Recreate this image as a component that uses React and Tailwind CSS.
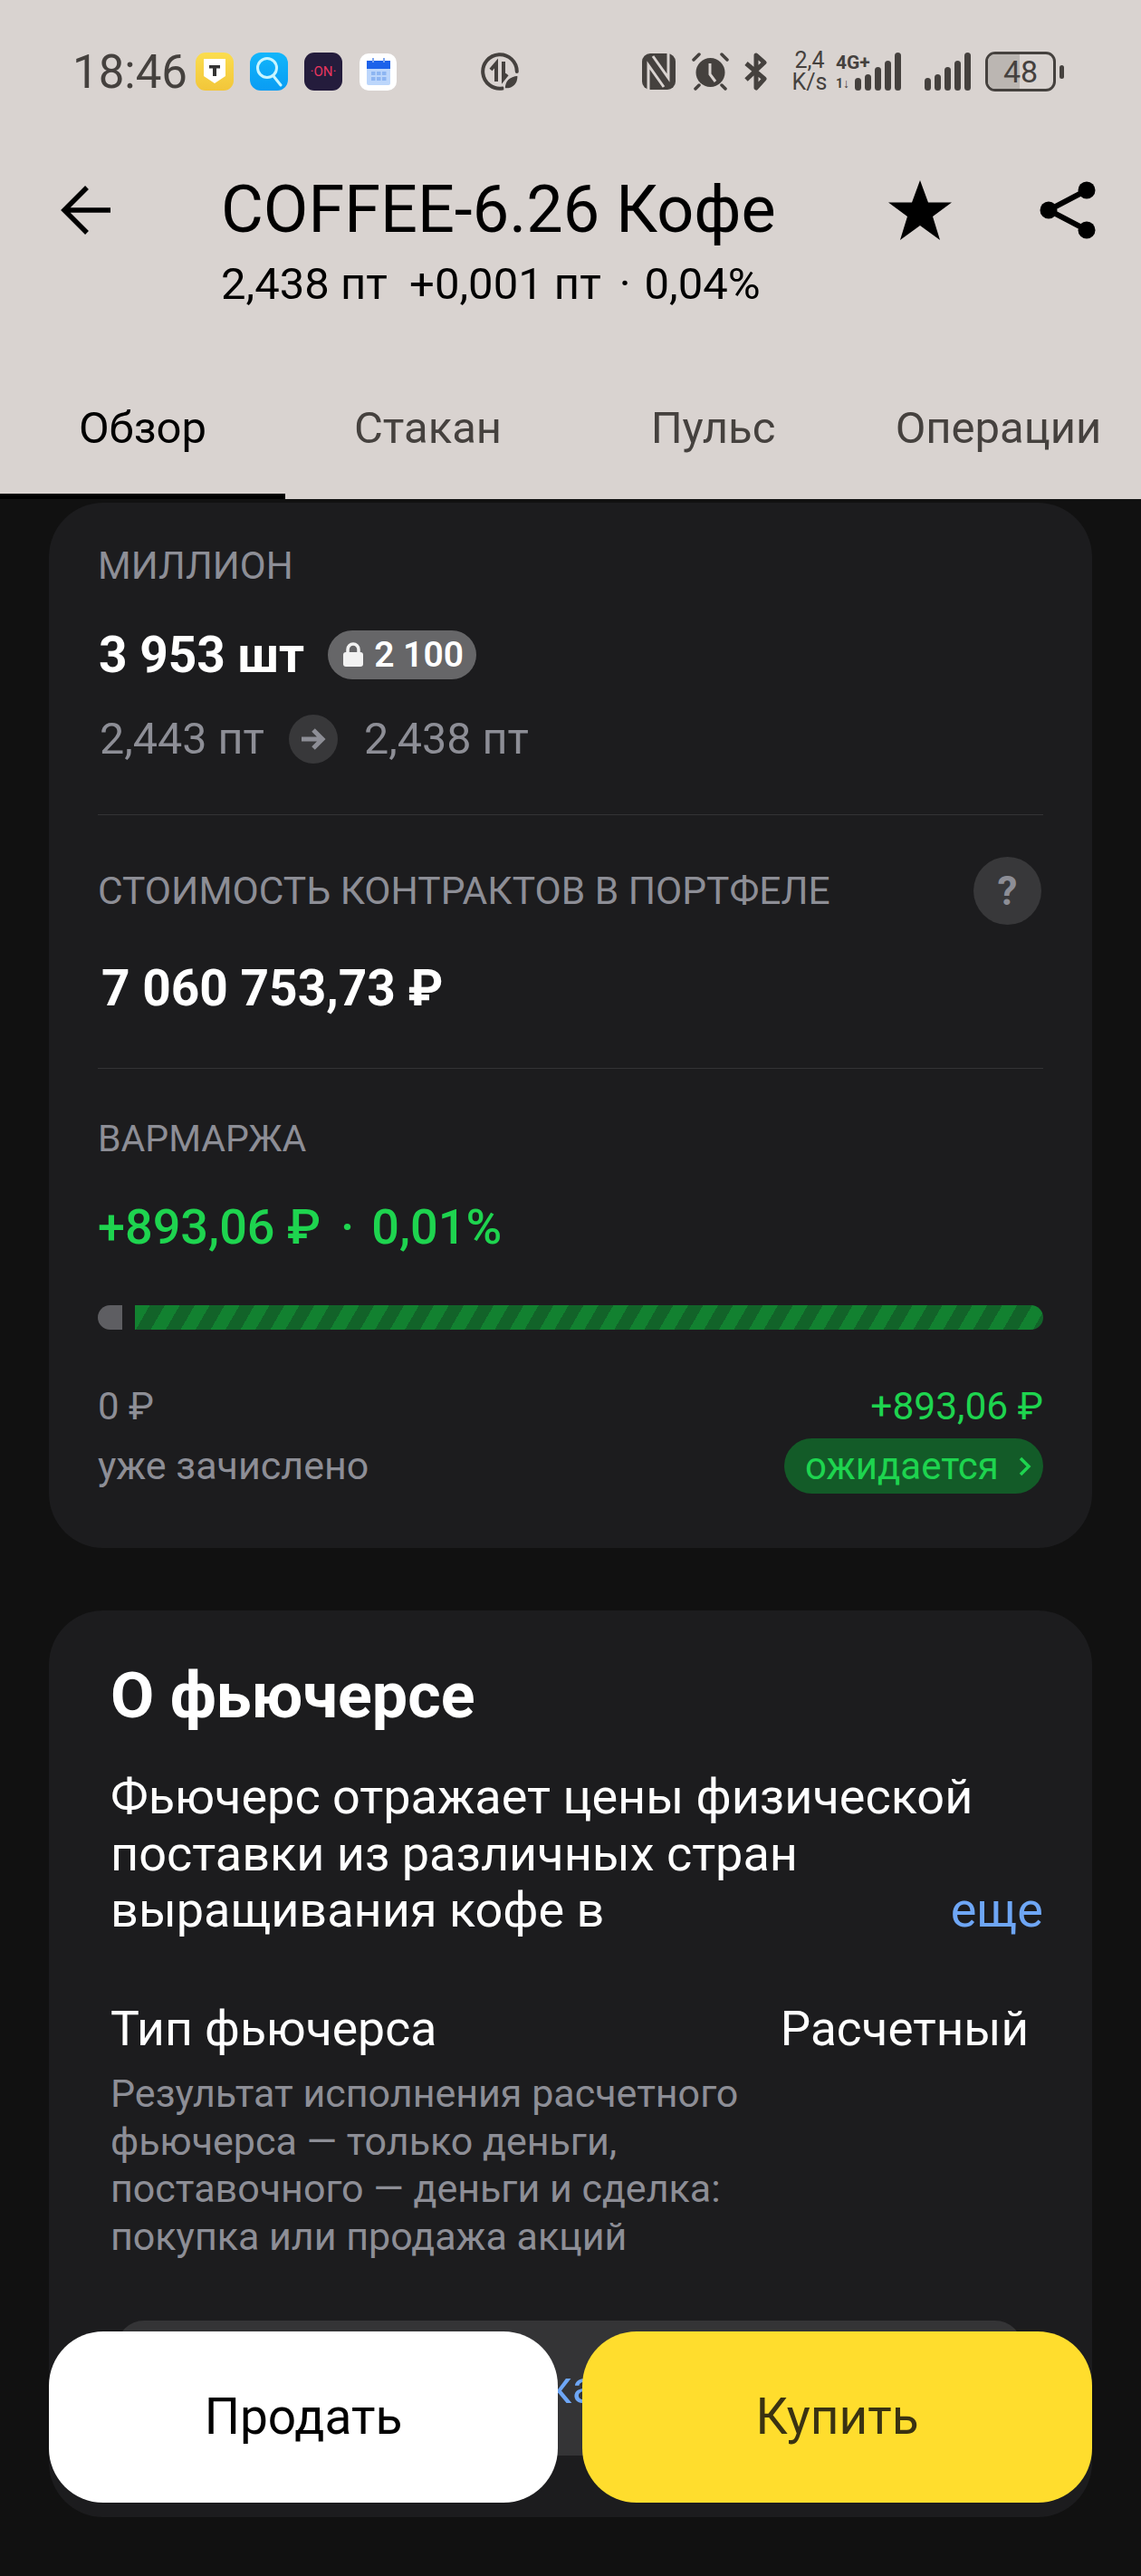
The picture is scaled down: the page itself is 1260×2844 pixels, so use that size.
import React from 'react';

const sans = 'font-[Roboto,"Noto_Sans",sans-serif]';

function TinkIcon() {
  return (
    <div className="w-[42px] h-[42px] rounded-[11px] bg-gradient-to-b from-[#fbdd4e] to-[#f2c63a] flex items-center justify-center">
      <svg width="26" height="30" viewBox="0 0 26 30">
        <path d="M1 1h24v19l-12 8-12-8z" fill="#fff" />
        <path d="M7 8h12v3.4h-4V20h-4v-8.600H7z" fill="#333" />
      </svg>
    </div>
  );
}

function SearchIcon() {
  return (
    <div className="w-[42px] h-[42px] rounded-[12px] bg-gradient-to-b from-[#12b6fb] to-[#0a9cf3] flex items-center justify-center">
      <svg width="30" height="34" viewBox="0 0 30 34" fill="none" stroke="#c8f5ff" strokeWidth="3">
        <circle cx="13" cy="13" r="10.500" />
        <path d="M20 22l8 10" strokeLinecap="round" />
      </svg>
    </div>
  );
}

function OnIcon() {
  return (
    <div className="w-[42px] h-[42px] rounded-[11px] bg-[#241c3c] flex items-center justify-center text-[#e8365f] text-[15px] leading-none">
      ·ON·
    </div>
  );
}

function CalendarIcon() {
  return (
    <div className="w-[41px] h-[41px] rounded-[10px] bg-white flex items-center justify-center">
      <svg width="26" height="30" viewBox="0 0 26 30">
        <rect x="0" y="10" width="26" height="20" rx="2" fill="#bcd6fb" />
        <path d="M0 3h26v9H0z" fill="#1c62ea" />
        <rect x="6" y="0" width="2" height="5" fill="#7ea6ef" />
        <rect x="18" y="0" width="2" height="5" fill="#7ea6ef" />
        <g fill="#8db5f2">
          <rect x="5" y="15" width="4.500" height="4" />
          <rect x="11" y="15" width="4.500" height="4" />
          <rect x="17" y="15" width="4.500" height="4" />
          <rect x="5" y="21" width="4.500" height="4" />
          <rect x="11" y="21" width="4.500" height="4" />
          <rect x="17" y="21" width="4.500" height="4" />
        </g>
      </svg>
    </div>
  );
}

function SyncIcon() {
  return (
    <svg width="42" height="42" viewBox="0 0 42 42" fill="none">
      <path d="M24 39.500A18.800 18.800 0 1 1 39.800 21" stroke="#45413e" strokeWidth="4" strokeLinecap="round" />
      <path d="M17 32V12l-6 7" stroke="#45413e" strokeWidth="4" />
      <path d="M25 10v19l4-5" stroke="#45413e" strokeWidth="4" />
      <path d="M26 40c0-9 6-14 15-15 1 9-5 16-15 15z" fill="#45413e" stroke="#d9d3d0" strokeWidth="1.500" />
    </svg>
  );
}

function NfcIcon() {
  return (
    <svg width="37" height="40" viewBox="0 0 37 40">
      <rect width="37" height="40" rx="9" fill="#45413e" />
      <path d="M7 40V13l17 24M12 3l17 24V0" fill="none" stroke="#d9d3d0" strokeWidth="3" />
    </svg>
  );
}

function AlarmIcon() {
  return (
    <svg width="43" height="42" viewBox="0 0 43 42">
      <circle cx="21.500" cy="22" r="16" fill="#45413e" />
      <path d="M21 12v12l6 8" fill="none" stroke="#d9d3d0" strokeWidth="3" />
      <path d="M3 8l6-6M40 8l-6-6M9 36l-4 4M34 36l4 4" stroke="#45413e" strokeWidth="3.500" strokeLinecap="round" />
    </svg>
  );
}

function BluetoothIcon() {
  return (
    <svg width="26" height="42" viewBox="0 0 26 42" fill="none" stroke="#45413e" strokeWidth="5" strokeLinejoin="round">
      <path d="M3 12l20 17-9 10V3l9 8L3 30" />
    </svg>
  );
}

function Bars({ heights }) {
  return (
    <div className="flex items-end gap-[4px]">
      {heights.map((h, i) => (
        <div key={i} className="w-[7px] rounded-full bg-[#45413e]" style={{ height: h }} />
      ))}
    </div>
  );
}

function StatusBar() {
  return (
    <div className="h-[158px] flex items-center pl-[80px] text-[#45413e]">
      <span className="w-[136px] text-[51px] leading-none">18:46</span>
      <div className="w-[60px]"><TinkIcon /></div>
      <div className="w-[60px]"><SearchIcon /></div>
      <div className="w-[61px]"><OnIcon /></div>
      <div className="w-[134px]"><CalendarIcon /></div>
      <div className="w-[178px]"><SyncIcon /></div>
      <div className="w-[54px]"><NfcIcon /></div>
      <div className="w-[58px]"><AlarmIcon /></div>
      <div className="w-[45px]"><BluetoothIcon /></div>
      <div className="w-[58px] flex flex-col items-center text-[25px] leading-[24px] -ml-[1px]">
        <span>2,4</span>
        <span>K/s</span>
      </div>
      <div className="w-[98px] relative h-[42px]">
        <span className="absolute left-0 -top-[1px] text-[21px] leading-[24px] font-bold">4G+</span>
        <span className="absolute left-0 bottom-[1px] text-[14px] leading-[14px] font-bold">1↓</span>
        <div className="absolute right-[26px] bottom-0"><Bars heights={[14, 18, 26, 33, 42]} /></div>
      </div>
      <div className="w-[67px]"><Bars heights={[14, 18, 26, 33, 42]} /></div>
      <div className="relative w-[78px] h-[44px] rounded-[11px] border-[3px] border-[#45413e] overflow-hidden flex items-center justify-center">
        <div className="absolute left-0 top-0 bottom-0 w-[48%] bg-[#bbb6b2]" />
        <span className="relative text-[34px] leading-none">48</span>
      </div>
      <div className="w-[5px] h-[15px] rounded-full bg-[#45413e] ml-[4px]" />
    </div>
  );
}

function NavBar() {
  return (
    <div className="h-[235px] pt-[34px] text-black">
      <div className="h-[80px] flex items-center pl-[66px]">
        <svg width="58" height="56" viewBox="0 0 58 56" fill="none" stroke="#000" strokeWidth="5.500">
          <path d="M56 28H6M30 3L5 28l25 25" />
        </svg>
        <div className="ml-[120px] text-[72px] leading-[80px] whitespace-nowrap">COFFEE-6.26 Кофе</div>
        <svg className="absolute left-[980px]" width="72" height="68" viewBox="0 0 72 68" fill="#000">
          <path d="M36 1l9 24.500h26L50 41l8 26-22-16-22 16 8-26L1 25.500h26z" />
        </svg>
        <svg className="absolute left-[1146px]" width="66" height="68" viewBox="0 0 66 68" fill="#000">
          <circle cx="54" cy="12" r="9.500" />
          <circle cx="12" cy="34" r="9.500" />
          <circle cx="54" cy="56" r="9.500" />
          <path d="M54 12L12 34l42 22" fill="none" stroke="#000" strokeWidth="6" />
        </svg>
      </div>
      <div className="mt-[12px] pl-[244px] text-[49px] leading-[60px] whitespace-pre">
        2,438 пт  +0,001 пт<span className="ml-[20px] mr-[15px]">·</span>0,04%
      </div>
    </div>
  );
}

function Tabs() {
  const tabs = ['Обзор', 'Стакан', 'Пульс', 'Операции'];
  return (
    <div className="grid grid-cols-4 h-[158px]">
      {tabs.map((t, i) => (
        <div
          key={t}
          className={i === 0
            ? 'flex items-center justify-center text-[49px] text-black border-b-[6px] border-black pt-[8px]'
            : 'flex items-center justify-center text-[49px] text-[#45413e] pt-[2px]'}
        >
          {t}
        </div>
      ))}
    </div>
  );
}

function PositionCard() {
  return (
    <div className="rounded-[60px] bg-[#1c1c1e] px-[54px] pt-[45px] pb-[60px]">
      <div className="text-[42px] leading-[50px] text-[#8d8e96]">МИЛЛИОН</div>

      <div className="mt-[43px] h-[60px] flex items-center">
        <span className="text-[55px] leading-[60px] font-bold text-white ml-[1px]">3 953 шт</span>
        <div className="ml-[26px] h-[54px] w-[164px] rounded-full bg-[#666668] flex items-center pl-[17px] text-white text-[39px] font-semibold">
          <svg width="22" height="30" viewBox="0 0 22 30">
            <path d="M5 13V9a6 6 0 0 1 12 0v4" fill="none" stroke="#f2f2f2" strokeWidth="3.500" />
            <rect y="12" width="22" height="16" rx="3" fill="#f2f2f2" />
          </svg>
          <span className="ml-[12px]">2 100</span>
        </div>
      </div>

      <div className="mt-[33px] h-[60px] flex items-center text-[48.500px] text-[#8d8e96]">
        <span className="w-[209px] ml-[2px]">2,443 пт</span>
        <div className="w-[54px] h-[54px] rounded-full bg-[#38383a] flex items-center justify-center">
          <svg width="28" height="26" viewBox="0 0 28 26" fill="none" stroke="#8d8e96" strokeWidth="5">
            <path d="M1 13h23M14 3l10 10-10 10" />
          </svg>
        </div>
        <span className="ml-[29px]">2,438 пт</span>
      </div>

      <div className="mt-[53px] h-[1px] bg-[#333335]" />

      <div className="mt-[46px] h-[75px] flex items-center justify-between">
        <span className="text-[42.500px] text-[#8d8e96]">СТОИМОСТЬ КОНТРАКТОВ В ПОРТФЕЛЕ</span>
        <div className="w-[75px] h-[75px] mr-[2px] rounded-full bg-[#38383a] flex items-center justify-center text-[44px] font-bold text-[#8d8e96]">?</div>
      </div>

      <div className="mt-[40px] text-[55px] leading-[60px] font-bold text-white ml-[4px]">7 060 753,73 ₽</div>

      <div className="mt-[58px] h-[1px] bg-[#333335]" />

      <div className="mt-[52px] text-[41px] leading-[50px] text-[#8d8e96]">ВАРМАРЖА</div>

      <div className="mt-[43px] text-[54px] leading-[60px] font-medium text-[#1ed44f] whitespace-pre">
        +893,06 ₽<span className="ml-[22px] mr-[19px]">·</span>0,01%
      </div>

      <div className="mt-[56px] h-[27px] flex gap-[14px]">
        <div className="w-[27px] rounded-l-full bg-[#5e5e62]" />
        <div className="flex-1 rounded-r-full bg-[repeating-linear-gradient(120deg,#128130_0,#128130_14.3px,#126329_14.3px,#126329_28.6px)]" />
      </div>

      <div className="mt-[60px] flex justify-between leading-[50px]">
        <span className="text-[42px] text-[#8d8e96]">0 ₽</span>
        <span className="text-[42.500px] text-[#1ed44f]">+893,06 ₽</span>
      </div>

      <div className="mt-[10px] h-[61px] flex items-center justify-between">
        <span className="text-[43px] text-[#8d8e96]">уже зачислено</span>
        <div className="w-[286px] h-[61px] rounded-full bg-[#135b28] flex items-center pl-[23px] text-[42px] text-[#1ed44f]">
          ожидается
          <svg className="ml-[22px]" width="14" height="22" viewBox="0 0 14 22" fill="none" stroke="#1ed44f" strokeWidth="3.500">
            <path d="M2 2l9 9-9 9" />
          </svg>
        </div>
      </div>
    </div>
  );
}

function AboutCard() {
  return (
    <div className="mt-[69px] rounded-[60px] bg-[#1c1c1e] px-[68px] pt-[56px] pb-[68px]">
      <h2 className="text-[70px] leading-[76px] font-bold text-white">О фьючерсе</h2>

      <div className="mt-[43px] text-[54px] leading-[62.5px] text-white">
        <div>Фьючерс отражает цены физической</div>
        <div>поставки из различных стран</div>
        <div className="flex justify-between -mr-[14px]">
          <span>выращивания кофе в</span>
          <span className="text-[#6ea6f5]">еще</span>
        </div>
      </div>

      <div className="mt-[68.5px] flex justify-between leading-[62px] text-white">
        <span className="text-[53.500px]">Тип фьючерса</span>
        <span className="mr-[2px] text-[53px]">Расчетный</span>
      </div>

      <div className="mt-[14px] text-[43px] leading-[52.5px] text-[#8d8e96]">
        <div>Результат исполнения расчетного</div>
        <div>фьючерса — только деньги,</div>
        <div>поставочного — деньги и сделка:</div>
        <div>покупка или продажа акций</div>
      </div>

      <div className="mt-[67px] ml-[7px] mr-[9px] h-[149px] rounded-[30px] bg-[#343436] flex items-center justify-center pr-[120px] text-[50px] text-[#6ea6f5]">
        Спецификация
      </div>
    </div>
  );
}

export default function App() {
  return (
    <div className={`relative w-[1260px] h-[2844px] overflow-hidden bg-[#111111] ${sans}`}>
      <div className="h-[551px] bg-[#d9d3d0]">
        <StatusBar />
        <NavBar />
        <Tabs />
      </div>

      <div className="px-[54px] pt-[4px]">
        <PositionCard />
        <AboutCard />
      </div>

      {/* Кнопки поверх контента */}
      <div className="absolute left-[54px] right-[54px] bottom-[81px] flex gap-[27px]">
        <button className="w-[562px] h-[189px] rounded-[60px] bg-white text-[55px] text-black">Продать</button>
        <button className="flex-1 h-[189px] rounded-[60px] bg-[#ffdd2d] text-[55px] text-[#3a3212]">Купить</button>
      </div>
    </div>
  );
}
